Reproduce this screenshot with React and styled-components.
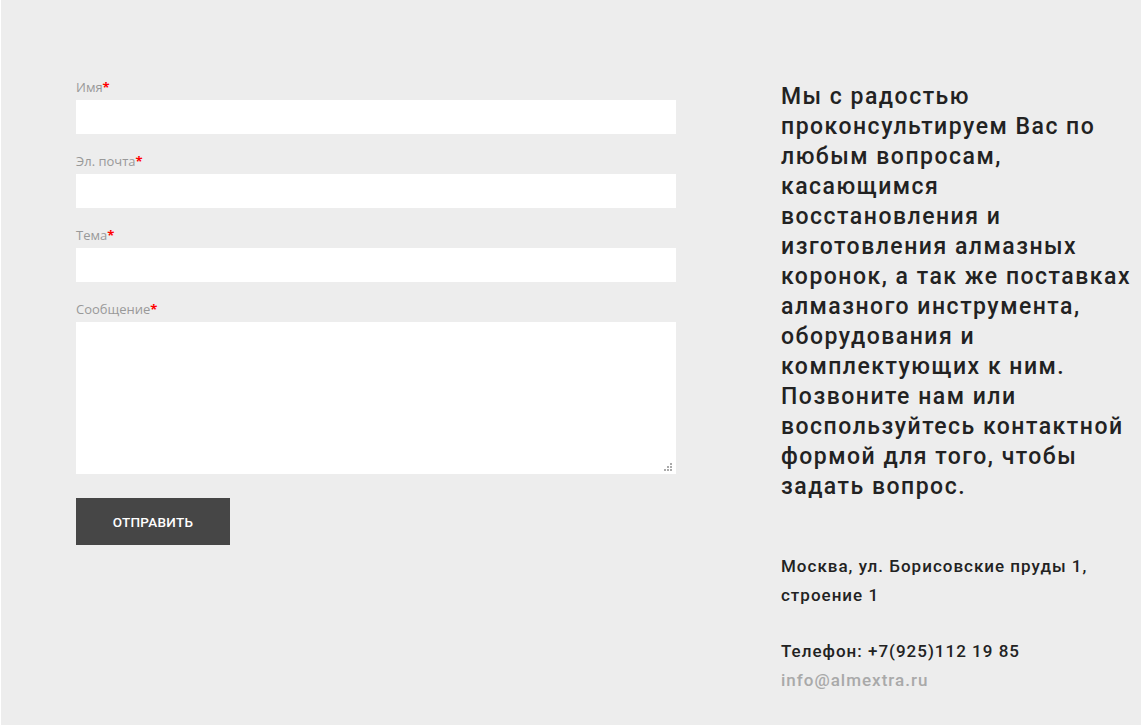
import styled, { createGlobalStyle } from "styled-components"

const Global = createGlobalStyle`
html, body {
margin:0;
padding:0;
background:#fff;
}
* { box-sizing:border-box; }
`

const Page = styled.div`
margin:0 3px 0 1px;
height:725px;
overflow:hidden;
background-color:#ededed;
padding:80px 0 0 75px;
display:flex;
align-items:flex-start;
font-family:Roboto, "Liberation Sans", sans-serif;
`

const Form = styled.form`
width:600px;
display:flex;
flex-direction:column;
`

const Field = styled.div`
display:flex;
flex-direction:column;
margin-bottom:20px;
`

const Label = styled.label`
font-family:"Open Sans", "Liberation Sans", sans-serif;
font-size:13px;
line-height:14px;
color:#999;
margin-bottom:6px;
`

const Star = styled.span`
color:#ff0000;
font-weight:bold;
`

const Input = styled.input`
display:block;
width:600px;
height:34px;
border:none;
outline:none;
background:#fff;
`

const AreaWrap = styled.div`
position:relative;
width:600px;
height:152px;
`

const TextArea = styled.textarea`
display:block;
width:100%;
height:100%;
border:none;
outline:none;
resize:none;
background:#fff;
`

const Grip = styled.svg`
position:absolute;
right:4px;
bottom:3px;
`

const SubmitBtn = styled.button`
width:154px;
height:47px;
margin-top:4px;
background-color:#464646;
color:#fff;
border:none;
font-family:Roboto, "Liberation Sans", sans-serif;
font-weight:500;
font-size:13.5px;
letter-spacing:0.3px;
cursor:pointer;
`

const Aside = styled.div`
margin:2px 0 0 105px;
width:356px;
color:#222;
`

const Lead = styled.h2`
margin:0;
font-size:23px;
font-weight:500;
line-height:30px;
letter-spacing:1.5px;
`

const Info = styled.p`
margin:${props => props.$top}px 0 0 0;
font-size:17px;
font-weight:500;
line-height:29px;
letter-spacing:1px;
color:${props => props.$muted ? "#a9a9a9" : "#222"};
`

const fields = [
    { id: "name", label: "Имя" },
    { id: "email", label: "Эл. почта" },
    { id: "subject", label: "Тема" },
]

function App() {
    return (
        <>
            <Global />
            <Page>
                <Form onSubmit={e => e.preventDefault()}>
                    {fields.map(f => (
                        <Field key={f.id}>
                            <Label htmlFor={f.id}>{f.label}<Star>*</Star></Label>
                            <Input id={f.id} name={f.id} type="text" />
                        </Field>
                    ))}
                    <Field>
                        <Label htmlFor="message">Сообщение<Star>*</Star></Label>
                        <AreaWrap>
                            <TextArea id="message" name="message" />
                            <Grip width="8" height="8" viewBox="0 0 8 8">
                                <rect x="6" y="0" width="2" height="2" fill="#aaa" />
                                <rect x="3" y="3" width="2" height="2" fill="#aaa" />
                                <rect x="6" y="3" width="2" height="2" fill="#aaa" />
                                <rect x="0" y="6" width="2" height="2" fill="#aaa" />
                                <rect x="3" y="6" width="2" height="2" fill="#aaa" />
                                <rect x="6" y="6" width="2" height="2" fill="#aaa" />
                            </Grip>
                        </AreaWrap>
                    </Field>
                    <SubmitBtn type="submit">ОТПРАВИТЬ</SubmitBtn>
                </Form>
                <Aside>
                    <Lead>
                        Мы с радостью проконсультируем Вас по любым вопросам, касающимся восстановления и изготовления алмазных коронок, а так же поставках алмазного инструмента, оборудования и комплектующих к ним. Позвоните нам или воспользуйтесь контактной формой для того, чтобы задать вопрос.
                    </Lead>
                    <Info $top={50}>Москва, ул. Борисовские пруды 1, строение 1</Info>
                    <Info $top={27}>Телефон: +7(925)112 19 85</Info>
                    <Info $top={0} $muted>info@almextra.ru</Info>
                </Aside>
            </Page>
        </>
    )
}

export default App
